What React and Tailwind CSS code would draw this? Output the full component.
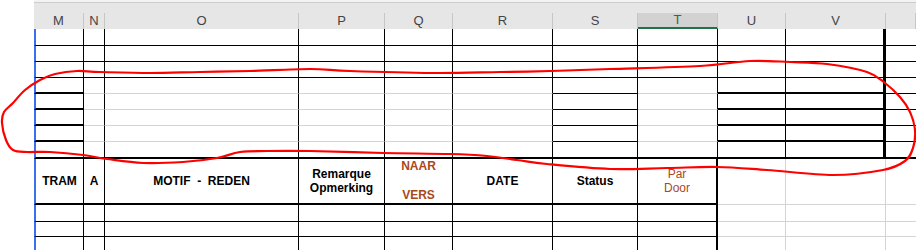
import React from 'react';

// column widths: row-number gutter, then M .. W
const COLS = 'grid-cols-[34px_50px_21px_194px_86px_68px_100px_85px_80px_68px_100px_1fr]';
const ROWS = 'grid-rows-[29px_17px_16px_16px_16px_16px_16px_16px_17px_46px_17px_15px_16px]';

// W runs past the right edge, its letter is off screen
const LETTERS = ['M', 'N', 'O', 'P', 'Q', 'R', 'S', 'T', 'U', 'V', ''];

const BOTTOM = {
  k: 'border-b border-b-black',
  K: 'border-b-2 border-b-black',
  g: 'border-b border-b-[#d4d4d4]',
  '': '',
};

const RIGHT = {
  k: 'border-r border-r-black',
  K2: 'border-r-2 border-r-black',
  K3: 'border-r-[3px] border-r-black',
  g: 'border-r border-r-[#d4d4d4]',
  '': '',
};

// "bottom/right" border per cell, M .. W
const top3 = ['k/k', 'k/k', 'k/k', 'k/k', 'k/k', 'k/k', 'k/k', 'k/k', 'k/k', 'k/K3', 'k/'];
const mid = ['K/k', 'g/k', 'g/k', 'g/k', 'g/k', 'g/k', 'k/k', 'g/k', 'K/k', 'K/K3', 'k/'];
const last = ['K/k', 'K/k', 'K/k', 'K/k', 'K/k', 'K/k', 'K/k', 'K/k', 'K/k', 'K/K3', 'K/'];
const head = ['K/k', 'K/k', 'K/k', 'K/k', 'K/k', 'K/k', 'K/k', 'K/K2', 'g/g', 'g/g', 'g/'];
const body = ['k/k', 'k/k', 'k/k', 'k/k', 'k/k', 'k/k', 'k/k', 'k/K2', 'g/g', 'g/g', 'g/'];

const GRID = [top3, top3, top3, mid, mid, mid, mid, last, head, body, body, body];

const bold = 'font-bold text-black';
const brown = 'text-[#a9481a]';

const HEADINGS = [
  <span className={bold}>TRAM</span>,
  <span className={bold}>A</span>,
  <span className={`${bold} whitespace-pre`}>MOTIF  -  REDEN</span>,
  <div className={`${bold} text-center leading-[14px]`}>
    <div>Remarque</div>
    <div>Opmerking</div>
  </div>,
  <div className={`${brown} font-bold h-full flex flex-col justify-between items-center leading-[14px] pb-[1px]`}>
    <div>NAAR</div>
    <div>VERS</div>
  </div>,
  <span className={bold}>DATE</span>,
  <span className={bold}>Status</span>,
  <div className={`${brown} text-center leading-[14px]`}>
    <div>Par</div>
    <div>Door</div>
  </div>,
  null,
  null,
  null,
];

const ColumnHeader = ({ letter }) => {
  const active = letter === 'T';
  return (
    <div className="bg-[#e6e6e6] flex flex-col">
      <div className="h-[2px] bg-[#f3f3f3]" />
      <div className="h-[1px] bg-[#cdcdcd]" />
      <div className="h-[10px]" />
      <div
        className={
          active
            ? 'h-[16px] flex items-center justify-center bg-[#d2d2d2] border-b-2 border-b-[#217346] border-r border-r-[#c6c6c6] text-[#217346] text-[13px]'
            : 'h-[16px] flex items-center justify-center border-r border-r-[#c6c6c6] text-[#444] text-[13px]'
        }
      >
        {letter}
      </div>
    </div>
  );
};

// closed catmull-rom curve through the given points
const smoothPath = (pts) => {
  const n = pts.length;
  let d = `M ${pts[0][0]} ${pts[0][1]}`;
  for (let i = 0; i < n; i++) {
    const p0 = pts[(i - 1 + n) % n];
    const p1 = pts[i];
    const p2 = pts[(i + 1) % n];
    const p3 = pts[(i + 2) % n];
    const c1 = [p1[0] + (p2[0] - p0[0]) / 6, p1[1] + (p2[1] - p0[1]) / 6];
    const c2 = [p2[0] - (p3[0] - p1[0]) / 6, p2[1] - (p3[1] - p1[1]) / 6];
    d += ` C ${c1[0].toFixed(1)} ${c1[1].toFixed(1)}, ${c2[0].toFixed(1)} ${c2[1].toFixed(1)}, ${p2[0]} ${p2[1]}`;
  }
  return d;
};

const LOOP = [
  [25, 90], [40, 80], [55, 74], [77, 71], [100, 72], [150, 73], [200, 72], [250, 71],
  [310, 69], [350, 71], [433, 73], [500, 72], [550, 71], [610, 69], [700, 66], [750, 61],
  [790, 62], [827, 64], [867, 72], [885, 83], [900, 97], [910, 112], [915, 130], [913, 148],
  [905, 161], [883, 170], [833, 175], [767, 170], [717, 167], [667, 168], [610, 169],
  [547, 164], [517, 160], [487, 156], [450, 154], [383, 153], [310, 151], [267, 151],
  [240, 152], [217, 158], [183, 162], [143, 163], [107, 159], [83, 155], [50, 152],
  [27, 152], [13, 150], [6, 140], [2, 123], [4, 112], [13, 103],
];

const Scribble = () => (
  <svg className="absolute top-0 left-0 pointer-events-none" width="916" height="250" viewBox="0 0 916 250">
    <path d={smoothPath(LOOP)} fill="none" stroke="#ff0000" strokeWidth="2.2" strokeLinejoin="round" />
  </svg>
);

export default function App() {
  return (
    <div className="relative w-[916px] h-[250px] overflow-hidden bg-white font-['Liberation_Sans',Arial,sans-serif] text-[12px]">
      <div className={`grid ${COLS} ${ROWS}`}>
        <div className="bg-white" />
        {LETTERS.map((l, i) => (
          <ColumnHeader key={i} letter={l} />
        ))}

        {GRID.map((row, r) => (
          <React.Fragment key={r}>
            <div className="bg-white" />
            {row.map((spec, c) => {
              const [b, rt] = spec.split('/');
              const edge = c === 0 ? 'border-l-2 border-l-[#3a6ff0]' : '';
              const content = r === 8 ? HEADINGS[c] : null;
              return (
                <div
                  key={c}
                  className={`${BOTTOM[b]} ${RIGHT[rt]} ${edge} flex items-center justify-center min-w-0 overflow-hidden`}
                >
                  {content}
                </div>
              );
            })}
          </React.Fragment>
        ))}
      </div>
      <Scribble />
    </div>
  );
}
